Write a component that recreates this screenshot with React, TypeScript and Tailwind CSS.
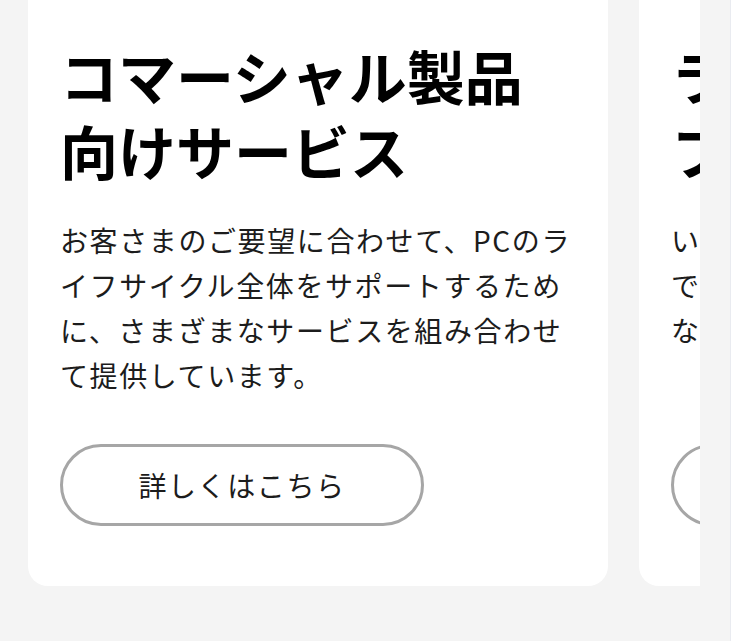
// App.tsx - service cards carousel (cropped view)

const cards = [
  {
    title: 'コマーシャル製品向けサービス',
    body: 'お客さまのご要望に合わせて、PCのライフサイクル全体をサポートするために、さまざまなサービスを組み合わせて提供しています。',
  },
  {
    title: 'ラップトップ向けフルサポート',
    body: '',
    lines: ['いつでも安心してPCをご利用', 'できるよう、導入から運用まで', 'なんでもサポートします。'],
  },
];

function ServiceCard({ title, body, lines }: { title: string; body: string; lines?: string[] }) {
  return (
    <div className="w-[580px] shrink-0 rounded-[20px] bg-white px-8 pt-[60px] pb-[60px] flex flex-col">
      <h2 className="text-[58px] font-bold leading-[75px] text-black">{title}</h2>
      <p className="mt-[30px] mb-[46px] text-[28px] leading-[45px] tracking-[1.6px] text-[#1c1c1c]">
        {lines
          ? lines.map((l, i) => (
              <span key={i} className="block whitespace-nowrap">
                {l}
              </span>
            ))
          : body}
      </p>
      <button
        type="button"
        className="mt-auto w-[364px] h-[82px] shrink-0 rounded-full border-[3px] border-[#a6a6a6] bg-white text-[28px] tracking-[1.6px] text-[#1c1c1c] flex items-center justify-center"
      >
        詳しくはこちら
      </button>
    </div>
  );
}

export default function App() {
  return (
    <div
      className="min-h-screen w-full bg-[#f4f4f4] flex overflow-hidden"
      style={{ fontFamily: '"Noto Sans CJK JP", "Noto Sans", sans-serif' }}
    >
      <div className="w-[700px] shrink-0 overflow-hidden self-start">
        <div className="-mt-[22px] pl-[28px] flex items-stretch gap-[31px]">
          {cards.map((c, i) => (
            <ServiceCard key={i} {...c} />
          ))}
        </div>
      </div>
      <div className="flex-1" />
      <div className="w-px bg-[#e9ebf0]" />
    </div>
  );
}
